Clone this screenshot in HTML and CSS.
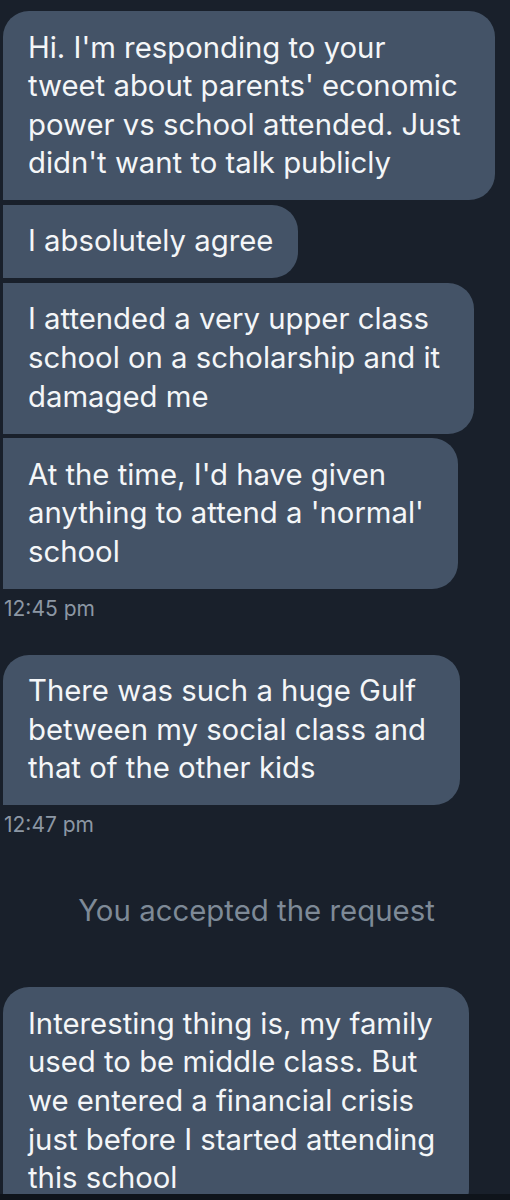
FILE: index.html
```html
<!DOCTYPE html>
<html>
<head>
	<title>Messages</title>
	<link rel="stylesheet" href="styles.css">
</head>
<body>
	<div id="screen">
		<div class="thread">
			<div class="group">
				<div class="bubble first">Hi. I'm responding to your<br>tweet about parents' economic<br>power vs school attended. Just<br>didn't want to talk publicly</div>
				<div class="bubble short">I absolutely agree</div>
				<div class="bubble">I attended a very upper class<br>school on a scholarship and it<br>damaged me</div>
				<div class="bubble last">At the time, I'd have given<br>anything to attend a 'normal'<br>school</div>
				<p class="time">12:45 pm</p>
			</div>

			<div class="group">
				<div class="bubble first last">There was such a huge Gulf<br>between my social class and<br>that of the other kids</div>
				<p class="time">12:47 pm</p>
			</div>

			<p class="notice">You accepted the request</p>

			<div class="group">
				<div class="bubble first">Interesting thing is, my family<br>used to be middle class. But<br>we entered a financial crisis<br>just before I started attending<br>this school</div>
			</div>
		</div>
	</div>
</body>
</html>
```

FILE: styles.css
```css
html, body {
	margin: 0;
	padding: 0;
	background-color: #0f141b;
}
#screen {
	width: 510px;
	height: 1194px;
	overflow: hidden;
	background-color: #19202b;
	font-family: Inter, "Noto Sans", sans-serif;
}
.thread {
	padding: 11px 0 0 3px;
}

.group {
	display: flex;
	flex-direction: column;
	align-items: flex-start;
	gap: 4.5px;
}
.bubble {
	background-color: #445367;
	color: #f4f6f8;
	font-size: 29.3px;
	line-height: 38.6px;
	padding: 17.5px 34px 17.5px 25px;
	border-radius: 0 26px 26px 0;
}
.bubble.short {
	padding-right: 25px;
}
.bubble.first {
	border-top-left-radius: 26px;
}

.time {
	margin: 2.5px 0 0 1px;
	font-size: 21px;
	line-height: 25px;
	color: #8c97a4;
}
.group + .group {
	margin-top: 33.5px;
}

.notice {
	margin: 56px 0 58px;
	text-align: center;
	font-size: 29.4px;
	line-height: 36px;
	color: #7e8a97;
}
```
